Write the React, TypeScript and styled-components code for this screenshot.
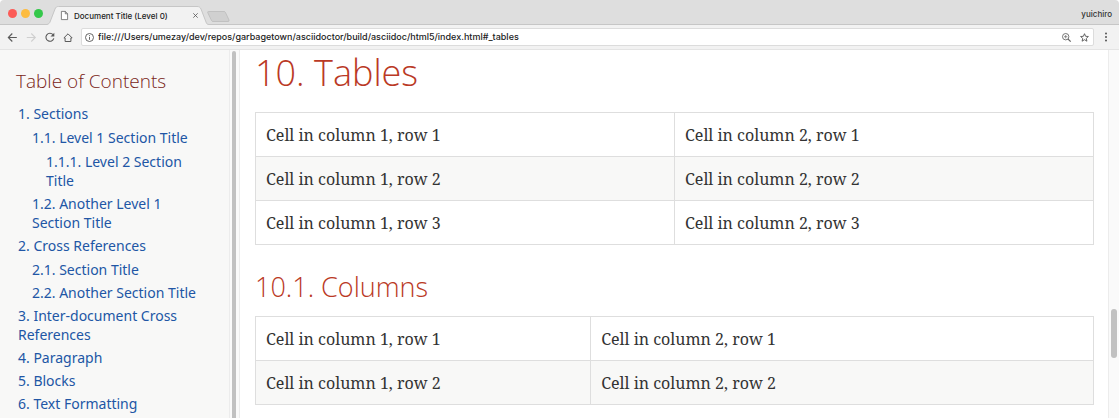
import React from "react";
import styled, { createGlobalStyle } from "styled-components";

const GlobalStyle = createGlobalStyle`
  * { box-sizing: border-box; }
  html, body, #root { height: 100%; }
  body { margin: 0; background: #fff; font-family: "Open Sans", "Noto Sans", sans-serif; }
`;

const Window = styled.div`
  display: flex;
  flex-direction: column;
  height: 100%;
  overflow: hidden;
`;

const TabStrip = styled.header`
  display: flex;
  align-items: flex-end;
  flex: none;
  height: 25px;
  padding: 0 7px 0 8px;
  background: #dedede;
  border-bottom: 1px solid #c6c6c6;
  border-radius: 4px 4px 0 0;
  font-family: Inter, Roboto, sans-serif;
  font-weight: 500;
`;

const Lights = styled.div`
  display: flex;
  gap: 4px;
  align-self: center;
  padding-top: 2px;
`;

const Light = styled.button<{ $color: string }>`
  width: 9px;
  height: 9px;
  padding: 0;
  border: 0;
  border-radius: 50%;
  background: ${(p) => p.$color};
`;

const Tab = styled.div`
  position: relative;
  display: flex;
  align-items: center;
  width: 162px;
  height: 19px;
  margin: 0 0 -1px 4px;
  padding: 0 11px 0 14px;
`;

const TabShape = styled.svg`
  position: absolute;
  inset: 0;
  width: 100%;
  height: 100%;
`;

const TabTitle = styled.span`
  position: relative;
  flex: 1;
  margin-left: 6px;
  color: #222;
  font-size: 8px;
  line-height: 12px;
  white-space: nowrap;
`;

const IconButton = styled.button`
  position: relative;
  display: flex;
  flex: none;
  padding: 0;
  border: 0;
  background: none;
`;

const Glyph = styled.svg`
  position: relative;
  display: block;
  flex: none;
  overflow: visible;
`;

const NewTab = styled(IconButton)`
  align-self: center;
  margin-left: -2px;
  padding-top: 8px;
`;

const Profile = styled.span`
  align-self: center;
  margin-left: auto;
  padding-top: 3px;
  color: #333;
  font-size: 8px;
  line-height: 12px;
`;

const Toolbar = styled.nav`
  display: flex;
  align-items: center;
  flex: none;
  gap: 8px;
  height: 25px;
  padding: 0 9px 0 7px;
  background: #f2f2f2;
  border-bottom: 1px solid #e4e4e4;
`;

const AddressBar = styled.div`
  display: flex;
  align-items: center;
  flex: 1;
  gap: 4px;
  height: 18px;
  padding: 0 4px 0 3px;
  background: #fff;
  border: 1px solid #dcdcdc;
  border-radius: 2px;
`;

const AddressInput = styled.input`
  flex: 1;
  min-width: 0;
  padding: 0;
  border: 0;
  outline: 0;
  background: none;
  color: #222;
  font: 500 9px/14px Inter, Roboto, sans-serif;
`;

const AddressActions = styled.div`
  display: flex;
  gap: 9px;
`;

const Page = styled.div`
  display: flex;
  flex: 1;
  min-height: 0;
`;

const Sidebar = styled.aside`
  flex: none;
  width: 230px;
  padding: 18px 20px 0 16px;
  overflow: hidden;
  background: #f8f8f7;
  border-right: 1px solid #ececec;
`;

const TocTitle = styled.h2`
  margin: 0;
  color: #7a2518;
  font-size: 19px;
  font-weight: 300;
  line-height: 27px;
`;

const TocList = styled.ul<{ $nested?: boolean }>`
  display: flex;
  flex-direction: column;
  gap: 4px;
  margin: ${(p) => (p.$nested ? "5px 0 0" : "9px 0 0 2px")};
  padding: 0 0 0 ${(p) => (p.$nested ? "14px" : "0")};
  list-style: none;
`;

const TocLink = styled.a`
  display: block;
  color: #2156a5;
  font-family: "Noto Sans", "Open Sans", sans-serif;
  font-size: 14px;
  line-height: 19px;
  text-decoration: none;
`;

const Track = styled.div<{ $edge?: boolean }>`
  flex: none;
  width: ${(p) => (p.$edge ? "11px" : "10px")};
  padding: ${(p) => (p.$edge ? "259px 2px 0" : "1px 3px 0 2px")};
  background: #fafafa;
  border: solid #ececec;
  border-width: 0 ${(p) => (p.$edge ? "0 0 1px" : "1px 0 0")};
`;

const Thumb = styled.div<{ $short?: boolean }>`
  height: ${(p) => (p.$short ? "49px" : "100%")};
  border-radius: ${(p) => (p.$short ? "3px" : "3px 3px 0 0")};
  background: #c1c1c1;
`;

const Content = styled.main`
  flex: 1;
  min-width: 0;
  padding: 0 14px 0 15px;
`;

const Heading = styled.h2`
  margin: 0 0 16px;
  color: #ba3925;
  font-size: 36px;
  font-weight: 300;
  line-height: 46px;
`;

const Subheading = styled.h3`
  margin: 23px 0 10px;
  color: #ba3925;
  font-size: 27px;
  font-weight: 300;
  line-height: 38px;
`;

const DataTable = styled.table`
  width: 100%;
  table-layout: fixed;
  border-collapse: collapse;
  border: 1px solid #dedede;
`;

const Row = styled.tr`
  &:nth-child(even) { background: #f8f8f7; }
`;

const Cell = styled.td<{ $width: string }>`
  width: ${(p) => p.$width};
  height: 44px;
  padding: 0 10px;
  border: 1px solid #dedede;
  color: #333;
  font-family: "Noto Serif", "DejaVu Serif Condensed", "DejaVu Serif", serif;
  font-size: 16px;
  line-height: 24px;
`;

type Entry = { label: string; children?: Entry[] };

const toc: Entry[] = [
  {
    label: "1. Sections",
    children: [
      {
        label: "1.1. Level 1 Section Title",
        children: [{ label: "1.1.1. Level 2 Section Title" }],
      },
      { label: "1.2. Another Level 1 Section Title" },
    ],
  },
  {
    label: "2. Cross References",
    children: [{ label: "2.1. Section Title" }, { label: "2.2. Another Section Title" }],
  },
  { label: "3. Inter-document Cross References" },
  { label: "4. Paragraph" },
  { label: "5. Blocks" },
  { label: "6. Text Formatting" },
];

function Toc({ entries, nested }: { entries: Entry[]; nested?: boolean }) {
  return (
    <TocList $nested={nested}>
      {entries.map((e) => (
        <li key={e.label}>
          <TocLink href="#_tables">{e.label}</TocLink>
          {e.children && <Toc entries={e.children} nested />}
        </li>
      ))}
    </TocList>
  );
}

function CellTable({ rows, widths }: { rows: number; widths: string[] }) {
  return (
    <DataTable>
      <tbody>
        {Array.from({ length: rows }, (_, r) => (
          <Row key={r}>
            {widths.map((w, c) => (
              <Cell key={c} $width={w}>{`Cell in column ${c + 1}, row ${r + 1}`}</Cell>
            ))}
          </Row>
        ))}
      </tbody>
    </DataTable>
  );
}

export default function App() {
  return (
    <Window>
      <GlobalStyle />
      <TabStrip>
        <Lights>
          <Light $color="#fc5b57" aria-label="Close window" />
          <Light $color="#fdbc40" aria-label="Minimize window" />
          <Light $color="#34c84a" aria-label="Zoom window" />
        </Lights>
        <Tab>
          <TabShape viewBox="0 0 162 19" preserveAspectRatio="none">
            <path d="M0 18.500C2 18 2.500 17 3 16L8 3C9 1 9.500 .5 11.500 .5H150C152 .5 153 1 154 3L159 16C159.500 17.500 160 18.500 162 18.500V19H0Z" fill="#f2f2f2" />
            <path d="M0 18.500C2 18 2.500 17 3 16L8 3C9 1 9.500 .5 11.500 .5H150C152 .5 153 1 154 3L159 16C159.500 17.500 160 18.500 162 18.500" fill="none" stroke="#c6c6c6" />
          </TabShape>
          <Glyph width="7" height="9" viewBox="0 0 7 9" fill="#fff" stroke="#666" strokeWidth=".8">
            <path d="M.4.4H4.300L6.600 2.800V8.600H.4ZM4.300.4V2.800H6.600" />
          </Glyph>
          <TabTitle>Document Title (Level 0)</TabTitle>
          <IconButton aria-label="Close tab">
            <Glyph width="5" height="5" viewBox="0 0 5 5" stroke="#555" strokeWidth=".8">
              <path d="M.3.3 4.700 4.700M4.700.3.3 4.700" />
            </Glyph>
          </IconButton>
        </Tab>
        <NewTab aria-label="New tab">
          <Glyph width="23" height="11" viewBox="0 0 23 11">
            <path d="M1.500.5H17Q18 .5 18.500 1.500L22 9Q22.500 10.500 21 10.500H6Q5 10.500 4.500 9.500L.8 1.800Q.3.5 1.500.5Z" fill="#d0d0d0" stroke="#b8b8b8" strokeWidth=".7" />
          </Glyph>
        </NewTab>
        <Profile>yuichiro</Profile>
      </TabStrip>
      <Toolbar>
        <IconButton aria-label="Back">
          <Glyph width="11" height="11" viewBox="0 0 11 11" fill="none" stroke="#5a5a5a" strokeWidth="1.100">
            <path d="M9.800 5.500H1.300M5.300 1.500 1.300 5.500 5.300 9.500" />
          </Glyph>
        </IconButton>
        <IconButton aria-label="Forward">
          <Glyph width="11" height="11" viewBox="0 0 11 11" fill="none" stroke="#cfcfcf" strokeWidth="1.100">
            <path d="M.8 5.500H9.300M5.300 1.500 9.300 5.500 5.300 9.500" />
          </Glyph>
        </IconButton>
        <IconButton aria-label="Reload">
          <Glyph width="10" height="11" viewBox="0 0 10 11" fill="none" stroke="#5a5a5a" strokeWidth="1.100">
            <path d="M8 2.700A4 4 0 1 0 8.800 6.300" />
            <path d="M9.300.8V4.600H5.500Z" fill="#5a5a5a" stroke="none" />
          </Glyph>
        </IconButton>
        <IconButton aria-label="Home">
          <Glyph width="10" height="11" viewBox="0 0 10 11" fill="none" stroke="#5a5a5a" strokeWidth="1">
            <path d="M.9 5.900 5 1.800 9.100 5.900H7.900V9.500H2.100V5.900Z" />
          </Glyph>
        </IconButton>
        <AddressBar>
          <Glyph width="9" height="9" viewBox="0 0 9 9" fill="none" stroke="#555" strokeWidth=".9">
            <circle cx="4.500" cy="4.500" r="4" />
            <path d="M4.500 4V6.800M4.500 2.200V3.200" />
          </Glyph>
          <AddressInput
            aria-label="Address"
            defaultValue="file:///Users/umezay/dev/repos/garbagetown/asciidoctor/build/asciidoc/html5/index.html#_tables"
          />
          <AddressActions>
            <IconButton aria-label="Page zoom">
              <Glyph width="9" height="9" viewBox="0 0 9 9" fill="none" stroke="#666" strokeWidth=".9">
                <circle cx="3.700" cy="3.700" r="3.200" />
                <path d="M6 6 8.700 8.700" strokeWidth="1.200" />
                <path d="M2 3.700H5.400M3.700 2V5.400" strokeWidth=".7" />
              </Glyph>
            </IconButton>
            <IconButton aria-label="Bookmark">
              <Glyph width="9" height="9" viewBox="0 0 9 9" fill="none" stroke="#555" strokeWidth=".9">
                <path d="M4.500.7 5.600 3.300 8.400 3.500 6.300 5.400 6.900 8.200 4.500 6.700 2.100 8.200 2.700 5.400.6 3.500 3.400 3.300Z" />
              </Glyph>
            </IconButton>
          </AddressActions>
        </AddressBar>
        <IconButton aria-label="Menu">
          <Glyph width="8" height="10" viewBox="0 0 8 10" fill="#555">
            <circle cx="4" cy="1.500" r="1" />
            <circle cx="4" cy="5" r="1" />
            <circle cx="4" cy="8.500" r="1" />
          </Glyph>
        </IconButton>
      </Toolbar>
      <Page>
        <Sidebar>
          <TocTitle>Table of Contents</TocTitle>
          <Toc entries={toc} />
        </Sidebar>
        <Track><Thumb /></Track>
        <Content>
          <Heading>10. Tables</Heading>
          <CellTable rows={3} widths={["50%", "50%"]} />
          <Subheading>10.1. Columns</Subheading>
          <CellTable rows={2} widths={["40%", "60%"]} />
        </Content>
        <Track $edge><Thumb $short /></Track>
      </Page>
    </Window>
  );
}
